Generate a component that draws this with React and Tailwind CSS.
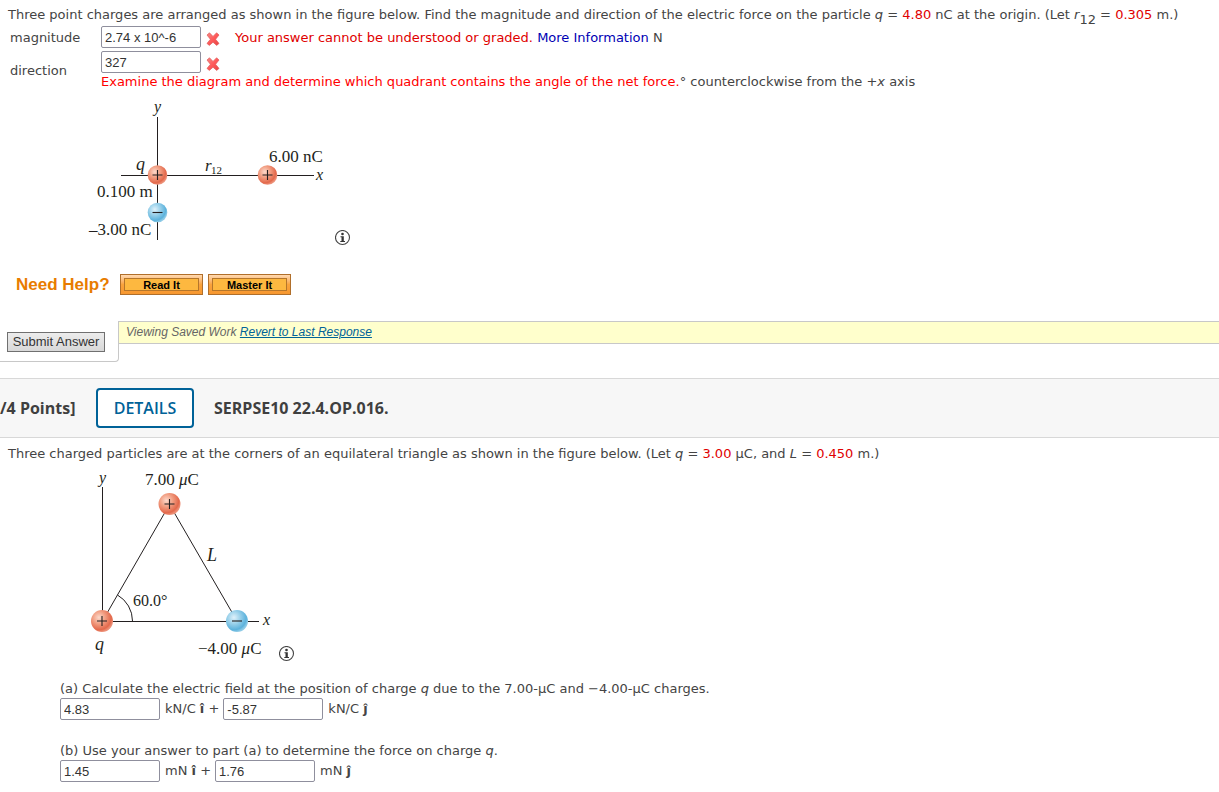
import React, { useState } from 'react';

const AnswerBox = ({ id, label, initial }) => {
  const [value, setValue] = useState(initial);

  return (
    <input
      id={id}
      type="text"
      aria-label={label}
      value={value}
      onChange={(e) => setValue(e.target.value)}
      className="w-[100px] h-[22px] shrink-0 px-[3px] border border-[#8f8f9d] rounded-xs bg-white font-['Liberation_Sans',sans-serif] text-[13px] text-[#333] outline-none"
    />
  );
};

const WrongMark = () => (
  <svg viewBox="0 0 16 16" className="w-4 h-4 shrink-0" role="img" aria-label="Incorrect">
    <defs>
      <linearGradient id="wrong" x1="0" y1="0" x2="1" y2="1">
        <stop offset="0" stopColor="#f58a86" />
        <stop offset="0.5" stopColor="#ff5a5a" />
        <stop offset="1" stopColor="#e64545" />
      </linearGradient>
    </defs>
    <path
      d="M2 4 L4.5 1.8 L8 5.4 L11.6 1.8 L14 4 L10.6 8.3 L14 12.4 L11.7 14.4 L8 11.2 L4.3 14.4 L2 12.4 L5.4 8.3 Z"
      fill="url(#wrong)"
      stroke="#e05a5a"
      strokeWidth="0.7"
      strokeLinejoin="round"
    />
  </svg>
);

const InfoIcon = () => (
  <button type="button" aria-label="Figure details" className="shrink-0">
    <svg viewBox="0 0 16 16" className="w-4 h-4">
      <circle cx="7.5" cy="7.5" r="7" fill="none" stroke="#444" strokeWidth="1.1" />
      <circle cx="7.5" cy="4" r="1.3" fill="#333" />
      <path d="M5.5 6.3 H8.8 V11 H10 V12.1 H5.3 V11 H6.5 V7.3 H5.5 Z" fill="#333" />
    </svg>
  </button>
);

const Charge = ({ x, y, r, negative }) => (
  <g>
    <circle cx={x} cy={y} r={r} fill={negative ? 'url(#blueBall)' : 'url(#redBall)'} />
    <path
      d={negative ? `M${x - 5} ${y} h10` : `M${x - 5} ${y} h10 M${x} ${y - 5} v10`}
      stroke="#231f20"
      strokeWidth="1.1"
    />
  </g>
);

const BallGradients = () => (
  <defs>
    <radialGradient id="redBall" cx="0.36" cy="0.34" r="0.66">
      <stop offset="0" stopColor="#fcd9cb" />
      <stop offset="0.45" stopColor="#f19c80" />
      <stop offset="0.85" stopColor="#e3694c" />
      <stop offset="1" stopColor="#ec8f76" />
    </radialGradient>
    <radialGradient id="blueBall" cx="0.36" cy="0.34" r="0.66">
      <stop offset="0" stopColor="#dff1fa" />
      <stop offset="0.45" stopColor="#98d0ea" />
      <stop offset="0.85" stopColor="#5cb2dc" />
      <stop offset="1" stopColor="#8ecae6" />
    </radialGradient>
  </defs>
);

const AxesFigure = () => (
  <svg
    viewBox="0 0 246 148"
    className="w-[246px] h-[148px] shrink-0 font-['Liberation_Serif',serif] text-[17px] fill-[#231f20]"
    role="img"
    aria-label="Three charges on the x and y axes"
  >
    <BallGradients />
    <path d="M72.5 19 V142 M36 77.5 H229" stroke="#231f20" fill="none" />
    <Charge x={72.5} y={77} r={9.8} />
    <Charge x={182.5} y={77} r={9.8} />
    <Charge x={72.5} y={114.5} r={9.8} negative />
    <text x="69" y="14" fontSize="16" fontStyle="italic">y</text>
    <text x="231" y="82" fontSize="16" fontStyle="italic">x</text>
    <text x="51" y="72" fontSize="18" fontStyle="italic">q</text>
    <text x="120" y="73" fontStyle="italic">r</text>
    <text x="126" y="76" fontSize="11">12</text>
    <text x="184" y="64">6.00 nC</text>
    <text x="12" y="99">0.100 m</text>
    <text x="4" y="137">–3.00 nC</text>
  </svg>
);

const TriangleFigure = () => (
  <svg
    viewBox="0 0 190 194"
    className="w-[190px] h-[194px] shrink-0 font-['Liberation_Serif',serif] text-[17px] fill-[#231f20]"
    role="img"
    aria-label="Three charges at the corners of an equilateral triangle"
  >
    <path d="M17.5 19 V153 M17 153.5 H174 M17.5 153 L84.5 36.5 L152 153" stroke="#231f20" fill="none" />
    <path d="M32.5 127 A30 30 0 0 1 47.5 153" stroke="#231f20" fill="none" />
    <Charge x={17} y={153} r={11} />
    <Charge x={84.5} y={36} r={11} />
    <Charge x={152} y={153} r={11} negative />
    <text x="14" y="15" fontSize="16" fontStyle="italic">y</text>
    <text x="178" y="157" fontSize="16" fontStyle="italic">x</text>
    <text x="10" y="182" fontSize="18" fontStyle="italic">q</text>
    <text x="122" y="93" fontSize="18" fontStyle="italic">L</text>
    <text x="48" y="138" fontSize="16">60.0°</text>
    <text x="60" y="17">7.00 <tspan fontStyle="italic">μ</tspan>C</text>
    <text x="113" y="186">−4.00 <tspan fontStyle="italic">μ</tspan>C</text>
  </svg>
);

const HelpButton = ({ children }) => (
  <button
    type="button"
    className="w-[83px] h-[21px] p-[3px] border border-[#b06f2b] bg-linear-to-b from-[#ffd9b0] via-[#f9a33c] to-[#f7972f] font-['Liberation_Sans',sans-serif] text-[11px] font-bold text-black"
  >
    <span className="flex h-full items-center justify-center border border-[#b5762b] bg-[#fdb840]">{children}</span>
  </button>
);

const VectorRow = ({ id, unit, i, j }) => (
  <div className="flex items-center h-[22px]">
    <AnswerBox id={`${id}-i`} label={`${unit} i component`} initial={i} />
    <label htmlFor={`${id}-i`} className="ml-[5px] mr-1">{unit} <b>î</b> +</label>
    <AnswerBox id={`${id}-j`} label={`${unit} j component`} initial={j} />
    <label htmlFor={`${id}-j`} className="ml-[5px]">{unit} <b>ĵ</b></label>
  </div>
);

const Value = ({ children }) => <span className="text-[#e00000]">{children}</span>;

const App = () => {
  return (
    <div className="bg-white font-['DejaVu_Sans',sans-serif] text-[13px] leading-4 text-[#444] overflow-x-hidden">
      {/* Question 1 */}
      <section>
        <p className="pt-[7px] px-2 h-[26px] whitespace-nowrap">
          Three point charges are arranged as shown in the figure below. Find the magnitude and direction of the electric force on the particle <i>q</i> = <Value>4.80</Value> nC at the origin. (Let <i>r</i><sub className="text-[13px] -bottom-[5px]">12</sub> = <Value>0.305</Value> m.)
        </p>

        <div className="pl-[10px] space-y-[3px]">
          <div className="flex items-center h-[22px]">
            <label htmlFor="magnitude" className="w-[91px] shrink-0 pt-px">magnitude</label>
            <AnswerBox id="magnitude" label="magnitude" initial="2.74 x 10^-6" />
            <span className="ml-1 pt-[3px]"><WrongMark /></span>
            <p className="ml-[14px] pt-px whitespace-nowrap">
              <Value>Your answer cannot be understood or graded.</Value> <a href="#more" className="text-[#0000b4]">More Information</a> N
            </p>
          </div>
          <div className="flex items-center">
            <label htmlFor="direction" className="w-[91px] shrink-0">direction</label>
            <div>
              <div className="flex items-center h-[22px]">
                <AnswerBox id="direction" label="direction" initial="327" />
                <span className="ml-1 pt-[3px]"><WrongMark /></span>
              </div>
              <p className="pt-px whitespace-nowrap">
                <span className="text-[#f00]">Examine the diagram and determine which quadrant contains the angle of the net force.</span>° counterclockwise from the +<i>x</i> axis
              </p>
            </div>
          </div>
        </div>

        <div className="flex items-end mt-2 pl-[85px] gap-1">
          <AxesFigure />
          <InfoIcon />
        </div>

        <div className="flex items-center gap-[5px] mt-7 pl-4">
          <h2 className="w-[99px] font-['Liberation_Sans',sans-serif] text-[17px] leading-5 font-bold text-[#e87c00]">Need Help?</h2>
          <HelpButton>Read It</HelpButton>
          <HelpButton>Master It</HelpButton>
        </div>

        <div className="flex items-start mt-[26px] font-['Liberation_Sans',sans-serif]">
          <div className="w-[119px] h-[41px] shrink-0 pl-[7px] pt-[11px] border-r border-b border-[#c8c8c8] rounded-br-sm">
            <button type="button" className="w-[98px] h-5 border border-[#707070] bg-linear-to-b from-[#ececec] to-[#d8d8d8] text-[13px] leading-4 whitespace-nowrap text-[#333]">
              Submit Answer
            </button>
          </div>
          <p className="grow h-[23px] pl-[7px] pt-[2px] border-y border-[#c8c8c8] bg-[#ffffcc] text-xs italic text-[#666]">
            Viewing Saved Work <a href="#revert" className="text-[#006298] underline">Revert to Last Response</a>
          </p>
        </div>
      </section>

      {/* Question 2 */}
      <section>
        <header className="flex items-center mt-4 h-[60px] border-y border-[#d8d8d8] bg-[#f7f7f7] font-['Open_Sans',sans-serif] text-base font-bold text-[#3f3f3f]">
          <span className="w-[96px] shrink-0">/4 Points]</span>
          <button type="button" className="w-[98px] h-10 shrink-0 border-2 border-[#006298] rounded bg-white font-semibold text-[#006298]">
            DETAILS
          </button>
          <h2 className="ml-5">SERPSE10 22.4.OP.016.</h2>
        </header>

        <p className="mt-2 px-2 whitespace-nowrap">
          Three charged particles are at the corners of an equilateral triangle as shown in the figure below. (Let <i>q</i> = <Value>3.00</Value> µC, and <i>L</i> = <Value>0.450</Value> m.)
        </p>

        <div className="flex items-end mt-[6px] pl-[85px] gap-1">
          <TriangleFigure />
          <InfoIcon />
        </div>

        <div className="mt-[19px] pl-[60px] pb-[10px] space-y-[23px]">
          <div className="space-y-px">
            <p>(a) Calculate the electric field at the position of charge <i>q</i> due to the 7.00-µC and −4.00-µC charges.</p>
            <VectorRow id="field" unit="kN/C" i="4.83" j="-5.87" />
          </div>
          <div className="space-y-px">
            <p>(b) Use your answer to part (a) to determine the force on charge <i>q</i>.</p>
            <VectorRow id="force" unit="mN" i="1.45" j="1.76" />
          </div>
        </div>
      </section>
    </div>
  );
};

export default App;
